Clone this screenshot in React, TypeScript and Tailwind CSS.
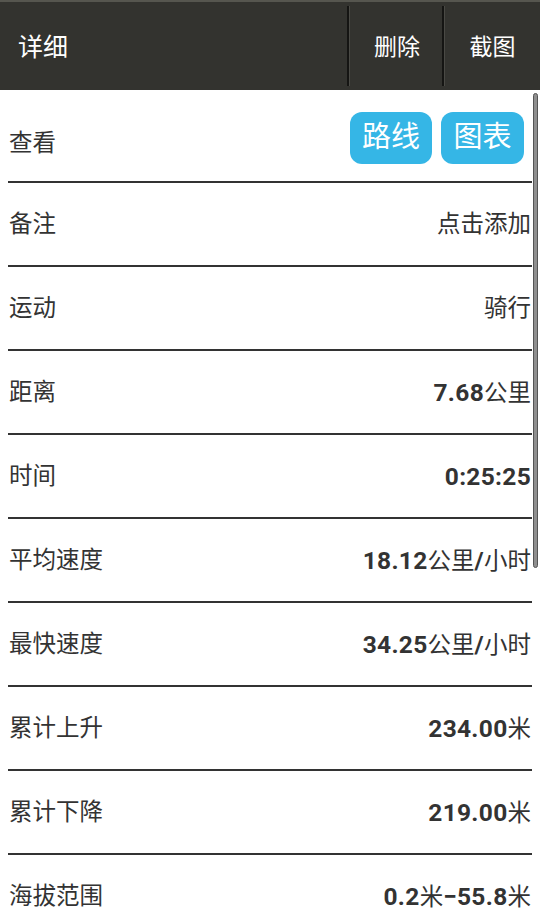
const cjk = { fontFamily: "Roboto, 'Noto Sans CJK SC', sans-serif" };

type Row = { label: string; value?: React.ReactNode };

function N({ children }: { children: React.ReactNode }) {
  return <span className="font-bold text-[24.5px] tracking-[0.3px]">{children}</span>;
}

const rows: Row[] = [
  { label: "备注", value: "点击添加" },
  { label: "运动", value: "骑行" },
  { label: "距离", value: <><N>7.68</N>公里</> },
  { label: "时间", value: <N>0:25:25</N> },
  { label: "平均速度", value: <><N>18.12</N>公里<N>/</N>小时</> },
  { label: "最快速度", value: <><N>34.25</N>公里<N>/</N>小时</> },
  { label: "累计上升", value: <><N>234.00</N>米</> },
  { label: "累计下降", value: <><N>219.00</N>米</> },
  { label: "海拔范围", value: <><N>0.2</N>米<N>−55.8</N>米</> },
];

export default function App() {
  return (
    <div className="w-[540px] h-[922px] overflow-hidden bg-white" style={cjk}>
      {/* Action bar */}
      <div className="h-[90px] bg-[#33332f] border-t-2 border-[#56564f] flex items-stretch">
        <div className="flex-1 flex items-center pl-[18px] pt-[4px] text-white text-[25px]">详细</div>
        <div className="w-[3px] my-[4px] bg-[#151513] border-r border-[#4a4a45]" />
        <div className="w-[92px] flex items-center justify-center pt-[4px] pl-[2px] text-white text-[23px]">删除</div>
        <div className="w-[3px] my-[4px] bg-[#151513] border-r border-[#4a4a45]" />
        <div className="flex-1 max-w-[95px] flex items-center justify-center pt-[4px] text-white text-[23px]">截图</div>
      </div>

      {/* List */}
      <div className="relative">
        <div className="pl-[8px] pr-[8px] text-[#333333] text-[23.5px]">
          <div className="h-[93px] flex items-center justify-between border-b-2 border-[#333333] pl-[1px]">
            <span className="pt-[16px]">查看</span>
            <div className="flex gap-[9px] pr-[8px] pt-[5px]">
              <div className="w-[82px] h-[52px] rounded-[12px] bg-[#35b6e6] text-white text-[29px] flex items-center justify-center">
                路线
              </div>
              <div className="w-[83px] h-[52px] rounded-[12px] bg-[#35b6e6] text-white text-[29px] flex items-center justify-center">
                图表
              </div>
            </div>
          </div>
          {rows.map((r) => (
            <div
              key={r.label}
              className="h-[84px] flex items-center justify-between border-b-2 border-[#333333] pl-[1px] pt-[2px]"
            >
              <span>{r.label}</span>
              <span className="pr-[1px]">{r.value}</span>
            </div>
          ))}
        </div>
        {/* scrollbar */}
        <div className="absolute right-[2px] top-[3px] w-[5px] h-[475px] rounded-full bg-[#8f8f8f] border border-[#555555]" />
      </div>
    </div>
  );
}
